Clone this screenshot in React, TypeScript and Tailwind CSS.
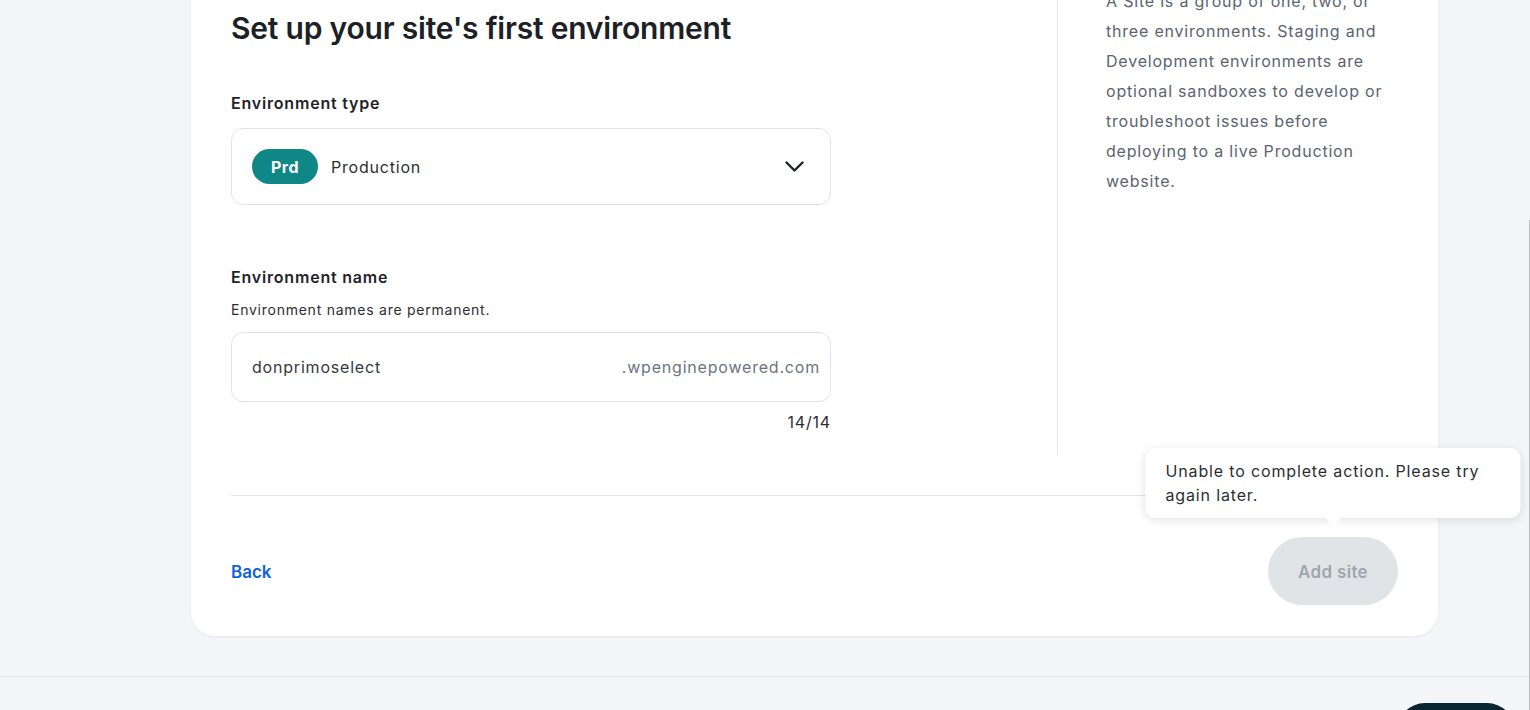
import { useState } from "react";

export default function App() {
  const [name] = useState("donprimoselect");

  return (
    <div className="relative min-h-[710px] w-full overflow-hidden bg-[#f4f5f7] font-['Inter',sans-serif] text-[#1f2328]">
      {/* card, page is scrolled so its top is out of view */}
      <div className="ml-[191px] mt-[-54px] w-[1247px] rounded-[24px] bg-white px-10 pt-10 pb-[31px] shadow-[0_1px_3px_rgba(16,24,40,0.06)]">
        <div className="flex">
          <div className="flex-1 pb-[21px]">
            <div className="max-w-[600px]">
              <h1 className="mt-6 text-[30px] font-semibold leading-9 tracking-[-0.007em] text-[#1d2125]">Set up your site's first environment</h1>

              <label className="mt-[45px] block text-base font-semibold leading-6 tracking-[0.05em]">Environment type</label>
              <button className="mt-[13px] flex h-[77px] w-full items-center rounded-xl border border-[#e1e3e6] pl-5 pr-[26px] text-left">
                <span className="flex h-[35px] w-[66px] items-center justify-center rounded-full bg-[#0e8786] text-base font-bold tracking-[0.03em] text-white">Prd</span>
                <span className="ml-[13px] flex-1 text-base tracking-[0.05em] text-[#2b2f33]">Production</span>
                <svg width="19" height="11" viewBox="0 0 19 11" fill="none">
                  <path d="M1.5 1.5 L9.5 9.5 L17.5 1.5" stroke="#1f2328" strokeWidth="2.4" strokeLinecap="round" strokeLinejoin="round" />
                </svg>
              </button>

              <label className="mt-[60px] block text-base font-semibold leading-6 tracking-[0.05em]">Environment name</label>
              <p className="mt-[11px] text-sm leading-5 tracking-[0.75px] text-[#2b2f33]">Environment names are permanent.</p>
              <div className="mt-3 flex h-[70px] items-center rounded-xl border border-[#e1e3e6] pl-5 pr-[10px] tracking-[0.05em]">
                <span className="flex-1 text-base text-[#333a40]">{name}</span>
                <span className="text-base text-[#6b7580]">.wpenginepowered.com</span>
              </div>
              <p className="mt-2 text-right text-base leading-6 tracking-[0.05em] text-[#2b2f33]">{name.length}/14</p>
            </div>
          </div>

          <aside className="w-[341px] border-l border-[#e3e5e8] pl-12">
            <p className="text-base leading-[30px] tracking-[0.05em] text-[#5b6470]">
              A Site is a group of one, two, or three environments. Staging and Development environments are optional sandboxes to develop or troubleshoot issues before deploying to a live Production website.
            </p>
          </aside>
        </div>

        <div className="mt-10 border-t border-[#e3e5e8]" />

        <div className="mt-[41px] flex items-center justify-between">
          <a href="#" className="pt-1 text-[17px] font-semibold text-[#0f63d9]">Back</a>
          <div className="relative">
            <div className="absolute bottom-[calc(100%+19px)] left-1/2 w-[375px] -translate-x-1/2 rounded-[10px] bg-white px-5 py-[11px] text-base leading-6 tracking-[0.85px] text-[#2b2f33] shadow-[0_2px_10px_rgba(16,24,40,0.12)]">
              Unable to complete action. Please try again later.
              <span className="absolute left-1/2 top-full h-0 w-0 -translate-x-1/2 border-x-[8px] border-t-[8px] border-x-transparent border-t-white" />
            </div>
            <button disabled className="h-[68px] w-[130px] rounded-full bg-[#e1e4e7] pt-1 text-[17px] font-semibold tracking-[0.02em] text-[#9ea6ae]">Add site</button>
          </div>
        </div>
      </div>

      {/* footer bar */}
      <div className="mt-10 border-t border-[#e1e3e6] pt-[26px] pr-[15px]">
        <div className="flex justify-end">
          <button className="h-[56px] w-[118px] rounded-[28px] bg-[#0b2633] text-base font-semibold text-white">Next</button>
        </div>
      </div>

      {/* scrollbar edge */}
      <div className="absolute right-0 top-[220px] bottom-0 w-px bg-[#bdbdbd]" />
    </div>
  );
}
